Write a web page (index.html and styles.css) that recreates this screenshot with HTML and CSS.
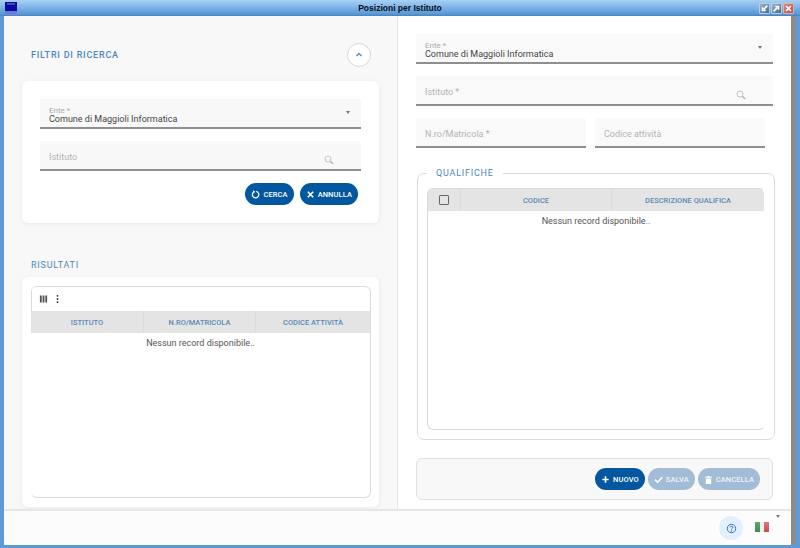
FILE: index.html
```html
<!DOCTYPE html>
<html lang="it">
<head>
<meta charset="utf-8">
<title>Posizioni per Istituto</title>
<link rel="stylesheet" href="styles.css">
</head>
<body>
<div class="window">
  <header class="titlebar">
    <svg class="logo" viewBox="0 0 12 12"><rect width="12" height="12" fill="#0a0a9c"/><rect x="2" y="1" width="8" height="2" fill="#3a4fc0"/><rect y="9" width="12" height="3" fill="#6f78d8"/></svg>
    <div class="title">Posizioni per Istituto</div>
    <div class="winbtns">
      <span class="winbtn"><svg viewBox="0 0 11 11"><path d="M9 2 4.5 6.5M3 4v4h4" fill="none" stroke="#fff" stroke-width="2"/></svg></span>
      <span class="winbtn"><svg viewBox="0 0 11 11"><path d="M2 9 6.5 4.5M4 3h4v4" fill="none" stroke="#fff" stroke-width="2"/></svg></span>
      <span class="winbtn close"><svg viewBox="0 0 11 11"><path d="M2.5 2.5l6 6M8.5 2.5l-6 6" fill="none" stroke="#fff" stroke-width="2"/></svg></span>
    </div>
  </header>
  <div class="frame">
    <div class="content">
      <div class="panes">
        <section class="pane left">
          <div class="section-head">
            <h2 class="heading">FILTRI DI RICERCA</h2>
            <button class="toggle"><svg viewBox="0 0 10 10"><path d="M2.5 6 5 3.6 7.5 6" fill="none" stroke="#3f7fbd" stroke-width="1.2"/></svg></button>
          </div>
          <div class="card filters">
            <div class="field has-value">
              <span class="float-label">Ente *</span>
              <span class="value">Comune di Maggioli Informatica</span>
              <span class="caret"></span>
            </div>
            <div class="field">
              <span class="placeholder">Istituto</span>
              <svg class="search" viewBox="0 0 10 10"><circle cx="4" cy="4" r="3" fill="none" stroke="#c4c4c4" stroke-width="1"/><path d="M6.2 6.2 9.2 9" stroke="#b5b5b5" stroke-width="1.5"/></svg>
            </div>
            <div class="actions">
              <button class="btn"><svg viewBox="0 0 10 10"><path d="M5.8 1.6A3.6 3.6 0 1 1 3 2.2" fill="none" stroke="#fff" stroke-width="1.4"/><path d="M2.2 0.4 4.8 2 2.6 3.8Z" fill="#fff"/></svg>CERCA</button>
              <button class="btn wide"><svg viewBox="0 0 10 10"><path d="M2 2l6 6M8 2l-6 6" fill="none" stroke="#fff" stroke-width="1.8"/></svg>ANNULLA</button>
            </div>
          </div>
          <h2 class="heading results-heading">RISULTATI</h2>
          <div class="card results">
            <div class="grid grid-results">
              <div class="toolbar">
                <svg class="tool" viewBox="0 0 10 10"><path d="M1 1h2v8H1zM4 1h2v8H4zM7 1h2v8H7z" fill="#55504f"/></svg>
                <svg class="tool" viewBox="0 0 10 10"><circle cx="5" cy="1.5" r="1" fill="#333"/><circle cx="5" cy="5" r="1" fill="#333"/><circle cx="5" cy="8.5" r="1" fill="#333"/></svg>
              </div>
              <div class="grid-head cols-left">
                <div class="col">ISTITUTO</div>
                <div class="col">N.RO/MATRICOLA</div>
                <div class="col">CODICE ATTIVITÀ</div>
              </div>
              <div class="empty">Nessun record disponibile..</div>
            </div>
          </div>
        </section>
        <section class="pane right">
          <div class="field has-value">
            <span class="float-label">Ente *</span>
            <span class="value">Comune di Maggioli Informatica</span>
            <span class="caret"></span>
          </div>
          <div class="field">
            <span class="placeholder">Istituto *</span>
            <svg class="search" viewBox="0 0 10 10"><circle cx="4" cy="4" r="3" fill="none" stroke="#c4c4c4" stroke-width="1"/><path d="M6.2 6.2 9.2 9" stroke="#b5b5b5" stroke-width="1.5"/></svg>
          </div>
          <div class="field-row">
            <div class="field half"><span class="placeholder">N.ro/Matricola *</span></div>
            <div class="field half"><span class="placeholder">Codice attività</span></div>
          </div>
          <fieldset class="group">
            <legend class="group-title">QUALIFICHE</legend>
            <div class="grid inner">
              <div class="grid-head cols-right">
                <div class="col"><span class="checkbox"></span></div>
                <div class="col">CODICE</div>
                <div class="col">DESCRIZIONE QUALIFICA</div>
              </div>
              <div class="empty">Nessun record disponibile..</div>
            </div>
          </fieldset>
          <div class="actionbar">
            <button class="btn"><svg viewBox="0 0 10 10"><path d="M5 1.5v7M1.5 5h7" fill="none" stroke="#fff" stroke-width="1.8"/></svg>NUOVO</button>
            <button class="btn off"><svg viewBox="0 0 10 10"><path d="M1 5.2 4 8 9.2 2.4" fill="none" stroke="#fff" stroke-width="1.7"/></svg>SALVA</button>
            <button class="btn off"><svg viewBox="0 0 10 10"><path d="M3.6 1h2.8v1H9v1H1V2h2.6zM2 4h6v6H2z" fill="#fff"/></svg>CANCELLA</button>
          </div>
        </section>
      </div>
      <footer class="footer">
        <button class="help"><svg viewBox="0 0 12 12"><circle cx="6" cy="6" r="4.6" fill="none" stroke="#2f6aa8" stroke-width="1"/><path d="M4.5 4.8C4.5 3.2 7.6 3.2 7.6 4.8 7.6 5.9 6 5.8 6 7.2" fill="none" stroke="#2f5f95" stroke-width="1"/><circle cx="6" cy="8.6" r=".6" fill="#2f5f95"/></svg></button>
        <span class="flag"><i class="g"></i><i class="w"></i><i class="r"></i></span>
        <span class="menu-caret"></span>
      </footer>
    </div>
    <div class="scrollbar"></div>
  </div>
</div>
</body>
</html>
```
FILE: styles.css
```css
* { box-sizing: border-box; }
html, body { margin: 0; padding: 0; }
body { width: 800px; height: 548px; overflow: hidden; font-family: Roboto, "Liberation Sans", sans-serif; }
button { font-family: inherit; border: 0; padding: 0; }
.window { width: 800px; height: 548px; display: flex; flex-direction: column; }

.titlebar { height: 16px; display: flex; align-items: center; position: relative; padding: 0 6px 0 5px; background: linear-gradient(#a8d0f4, #7fb5e8 45%, #5596d4 90%, #4a7fb5); }
.logo { width: 12px; height: 12px; }
.title { position: absolute; left: 0; right: 0; text-align: center; font: bold 8.5px "Liberation Sans", sans-serif; color: #0a0a14; }
.winbtns { margin-left: auto; display: flex; gap: 1px; position: relative; }
.winbtn { width: 11px; height: 11px; display: block; border-radius: 1px; background: linear-gradient(135deg, #9fb6c9, #3f6a90); border: 1px solid #b9cfe2; }
.winbtn svg { display: block; width: 9px; height: 9px; }
.winbtn.close { background: linear-gradient(135deg, #d88a80, #b8504a); border-color: #e0b4ae; }

.frame { flex: 1; min-height: 0; display: flex; border-left: 4px solid #5b9bd8; border-right: 4px solid #5b9bd8; border-bottom: 3px solid #5b9bd8; }
.content { flex: 1; min-width: 0; display: flex; flex-direction: column; }
.scrollbar { width: 5px; background: #8c8c8c; }

.panes { flex: 1; min-height: 0; display: flex; }
.pane { width: 393px; display: flex; flex-direction: column; }
.pane.left { background: #f8f8f8; border-right: 1px solid #e4e4e4; width: 394px; padding: 27px 18px 2px; }
.pane.right { background: #fff; padding: 18px 18px 0; }

.section-head { display: flex; align-items: center; justify-content: space-between; padding: 0 8px 0 9px; height: 24px; }
.heading { margin: 0; font-size: 9px; font-weight: 500; letter-spacing: .78px; line-height: 14px; color: #4c86bd; }
.toggle { width: 24px; height: 24px; border-radius: 50%; border: 1px solid #d6d6d6; background: #fff; display: flex; align-items: center; justify-content: center; }
.toggle svg { width: 10px; height: 10px; }

.card { background: #fff; border-radius: 6px; box-shadow: 0 1px 5px rgba(0,0,0,.07); }
.filters { margin-top: 14px; padding: 18px; }
.results-heading { margin: 35px 0 5px 9px; font-weight: 400; }
.results { flex: 1; min-height: 0; padding: 9px 8px 9px 9px; display: flex; }

.field { position: relative; height: 30px; background: #f8f8f8; border-bottom: 2px solid #8f8f8f; margin-bottom: 12px; padding: 0 9px; border-radius: 2px 2px 0 0; }
.pane.right > .field, .field-row .field { background: #f9f9f9; }
.float-label { display: block; padding-top: 8px; font-size: 8px; line-height: 7px; color: #aaa; }
.value { display: block; margin-top: 1px; font-size: 9px; line-height: 9px; color: #444; }
.placeholder { display: block; padding-top: 10px; font-size: 9px; line-height: 12px; color: #b4b4b4; }
.caret { position: absolute; right: 11px; top: 12px; border: 2.5px solid transparent; border-top: 3px solid #777; border-bottom: 0; }
.search { position: absolute; right: 27px; top: 14px; width: 10px; height: 10px; }

.field-row { display: flex; gap: 9px; }
.half { width: 170px; margin-bottom: 0; }

.actions { display: flex; justify-content: flex-end; gap: 6px; padding-right: 3px; }
.btn { height: 22px; padding: 0 6px; border-radius: 11px; background: #03579f; color: #fff; font-size: 7.5px; font-weight: 500; display: flex; align-items: center; gap: 3px; letter-spacing: .1px; }
.btn svg { width: 9px; height: 9px; flex: none; }
.btn.off { background: #a3bcd6; color: #eef3f8; }

.grid { flex: 1; min-width: 0; border: 1px solid #dadada; border-radius: 6px; overflow: hidden; background: #fff; }
.grid-results { border-left: 0; }
.inner { height: 242px; border-right-color: transparent; }
.toolbar { height: 24px; display: flex; align-items: center; gap: 5px; padding-left: 7px; border-left: 1px solid #dadada; }
.tool { width: 9px; height: 10px; }
.grid-head { height: 22px; display: grid; background: #e4e4e4; }
.cols-left { grid-template-columns: 112px 112px 1fr; }
.cols-right { grid-template-columns: 32px 151px 1fr; }
.col { display: flex; align-items: center; justify-content: center; font-size: 7.5px; font-weight: 500; color: #5a8ab8; border-left: 1px solid #dcdcdc; }
.col:first-child { border-left: 0; }
.empty { text-align: center; font-size: 9px; line-height: 12px; padding-top: 4px; color: #555; }
.checkbox { width: 10px; height: 10px; border: 1.5px solid #666; border-radius: 1px; }

.group { margin: 18px -2px 0 1px; padding: 8px 9px 9px; height: 274px; border: 1px solid #dcdcdc; border-radius: 7px; min-width: 0; }
.group-title { padding: 0 9px; font-size: 9px; letter-spacing: .78px; line-height: 14px; color: #4c86bd; }

.actionbar { margin-top: 18px; height: 42px; display: flex; justify-content: flex-end; align-items: center; gap: 3px; padding-right: 12px; background: #f8f8f8; border: 1px solid #dedede; border-radius: 6px; }

.footer { height: 36px; position: relative; display: flex; align-items: center; justify-content: flex-end; gap: 12px; padding-right: 22px; background: #fcfcfc; border-top: 2px solid #e6e6e6; }
.help { width: 24px; height: 24px; border-radius: 50%; background: #e2f0fd; display: flex; align-items: center; justify-content: center; }
.help svg { width: 11px; height: 11px; }
.flag { display: flex; width: 14px; height: 10px; margin-top: -3px; }
.flag i { flex: 1; display: block; }
.flag .g { background: linear-gradient(#5fa673, #3c8a52); }
.flag .w { background: #f0f0f0; }
.flag .r { background: linear-gradient(#dc7a7a, #c94a4a); }
.menu-caret { position: absolute; right: 11px; top: 4px; border: 2.5px solid transparent; border-top: 3px solid #777; border-bottom: 0; }
```
